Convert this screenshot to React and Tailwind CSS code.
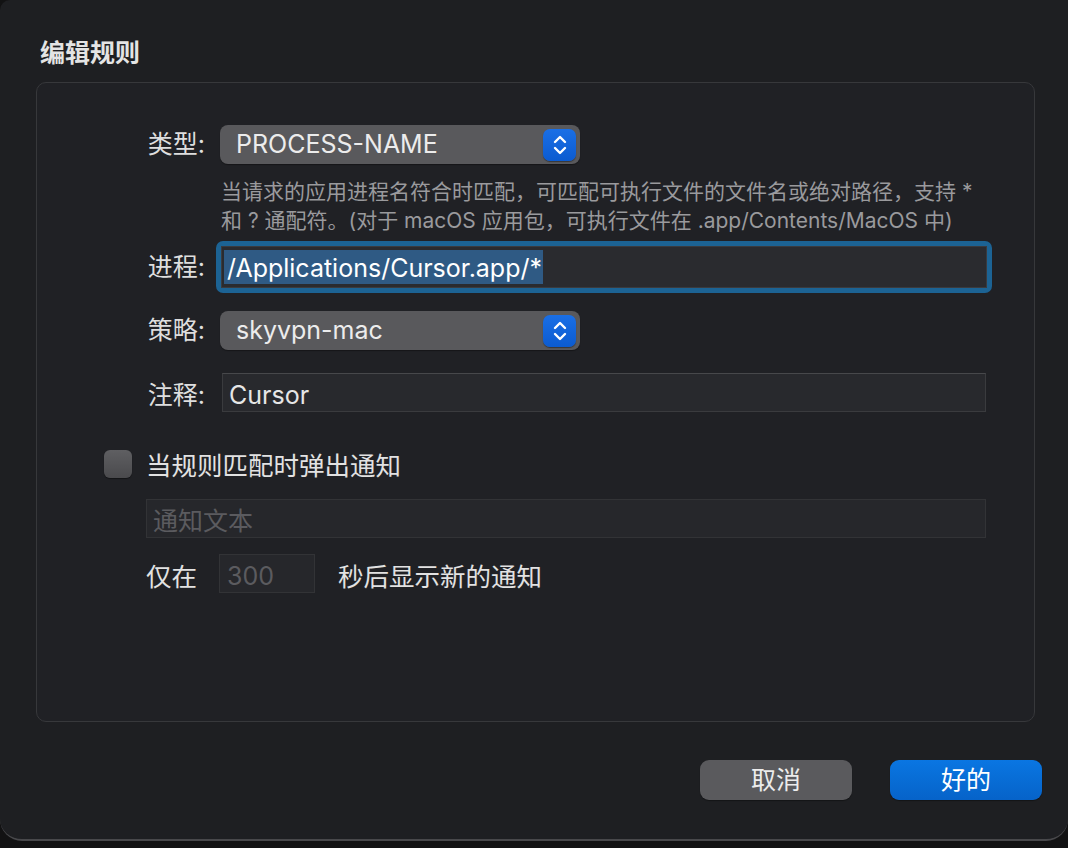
import React from 'react'

function Stepper() {
  return (
    <div className="w-[33px] h-[32px] rounded-[7px] bg-gradient-to-b from-[#1a6fe6] to-[#0b5bd0] flex items-center justify-center shadow-[0_1px_1px_rgba(0,0,0,0.4)]">
      <svg width="16" height="22" viewBox="0 0 16 22" fill="none" stroke="#ffffff" strokeWidth="2.4" strokeLinecap="round" strokeLinejoin="round">
        <path d="M3 8 L8 3 L13 8" />
        <path d="M3 14 L8 19 L13 14" />
      </svg>
    </div>
  )
}

function Popup({ value }) {
  return (
    <div className="w-[360px] h-[39px] rounded-[8px] bg-[#59595c] flex items-center justify-between pl-[16px] pr-[4px] shadow-[0_1px_1px_rgba(0,0,0,0.35)]">
      <span className="text-[25px] text-[#ececec] leading-none">{value}</span>
      <Stepper />
    </div>
  )
}

function Label({ children, low }) {
  return (
    <div className={`w-[168px] shrink-0 text-right text-[25px] text-[#dedede] leading-none ${low ? 'translate-y-[3px]' : ''}`}>{children}</div>
  )
}

export default function App() {
  return (
    <div className="w-[1068px] h-[848px] bg-[#121213] overflow-hidden font-['Inter','Noto_Sans_CJK_SC',sans-serif]">
      <div className="h-[841px] bg-[#1e1f22] rounded-b-[22px] rounded-tl-[10px] border-b-2 border-[#48484b] pl-[36px] pr-[33px] pt-[34px] flex flex-col">
        <h1 className="text-[25px] font-bold text-[#e4e4e4] pl-[4px] leading-[34px] translate-y-[2px]">编辑规则</h1>

        {/* group box */}
        <div className="mt-[14px] h-[640px] rounded-[10px] border border-[#37383b] bg-[#202125] pt-[42px] flex flex-col">
          {/* 类型 */}
          <div className="flex items-center">
            <Label>类型:</Label>
            <div className="ml-[15px]">
              <Popup value="PROCESS-NAME" />
            </div>
          </div>

          {/* help */}
          <div className="mt-[11px] pl-[184px] text-[21px] leading-[29px] text-[#9a9a9d] whitespace-nowrap translate-y-[2px]">
            <div>当请求的应用进程名符合时匹配，可匹配可执行文件的文件名或绝对路径，支持 *</div>
            <div>和 ? 通配符。(对于 macOS 应用包，可执行文件在 .app/Contents/MacOS 中)</div>
          </div>

          {/* 进程 */}
          <div className="mt-[8px] flex items-center">
            <Label>进程:</Label>
            <div className="ml-[11px] w-[776px] h-[52px] rounded-[7px] bg-[#1c6394] p-[5px]">
              <div className="h-full bg-[#2a2b2f] border border-[#3a3b3f] flex items-center pl-[2px]">
                <span className="bg-[#2f5a84] h-[34px] flex items-center pl-[3px] pr-[1px] text-[25px] text-white leading-none">
                  <span className="translate-y-[1px]">/Applications/Cursor.app/*</span>
                </span>
              </div>
            </div>
          </div>

          {/* 策略 */}
          <div className="mt-[18px] flex items-center">
            <Label>策略:</Label>
            <div className="ml-[15px]">
              <Popup value="skyvpn-mac" />
            </div>
          </div>

          {/* 注释 */}
          <div className="mt-[23px] flex items-center">
            <Label low>注释:</Label>
            <div className="ml-[17px] w-[764px] h-[39px] bg-[#28292d] border border-[#3a3b3e] border-t-[#47484b] flex items-center pl-[6px]">
              <span className="text-[25px] text-[#e6e6e6] leading-none translate-y-[3px]">Cursor</span>
            </div>
          </div>

          {/* checkbox */}
          <div className="mt-[38px] ml-[67px] flex items-center">
            <div className="w-[28px] h-[28px] rounded-[6px] bg-gradient-to-b from-[#5f5f62] to-[#4a4a4d] shadow-[0_1px_1px_rgba(0,0,0,0.4)]" />
            <span className="ml-[14px] text-[25.5px] text-[#e2e2e2] leading-none translate-y-[2px]">当规则匹配时弹出通知</span>
          </div>

          {/* notification text */}
          <div className="mt-[21px] ml-[109px] w-[840px] h-[39px] bg-[#26272b] border border-[#323336] flex items-center pl-[6px]">
            <span className="text-[25px] text-[#5b5b5f] leading-none translate-y-[3px]">通知文本</span>
          </div>

          {/* interval */}
          <div className="mt-[16px] ml-[109px] flex items-center">
            <span className="text-[25.5px] text-[#e2e2e2] leading-none translate-y-[3px]">仅在</span>
            <div className="ml-[22px] w-[96px] h-[39px] bg-[#26272b] border border-[#323336] flex items-center pl-[7px]">
              <span className="text-[25px] text-[#5b5b5f] leading-none translate-y-[3px]">300</span>
            </div>
            <span className="ml-[23px] text-[25.5px] text-[#e2e2e2] leading-none translate-y-[3px]">秒后显示新的通知</span>
          </div>
        </div>

        {/* buttons */}
        <div className="mt-[38px] mr-[-7px] flex justify-end gap-[38px]">
          <button className="w-[152px] h-[40px] rounded-[9px] bg-[#5a5a5d] text-[25px] text-[#ececec] leading-none shadow-[0_1px_1px_rgba(0,0,0,0.35)]">取消</button>
          <button className="w-[152px] h-[40px] rounded-[9px] bg-gradient-to-b from-[#0a76e2] to-[#0663c9] text-[25px] text-white leading-none shadow-[0_1px_1px_rgba(0,0,0,0.35)]">好的</button>
        </div>
      </div>
    </div>
  )
}
